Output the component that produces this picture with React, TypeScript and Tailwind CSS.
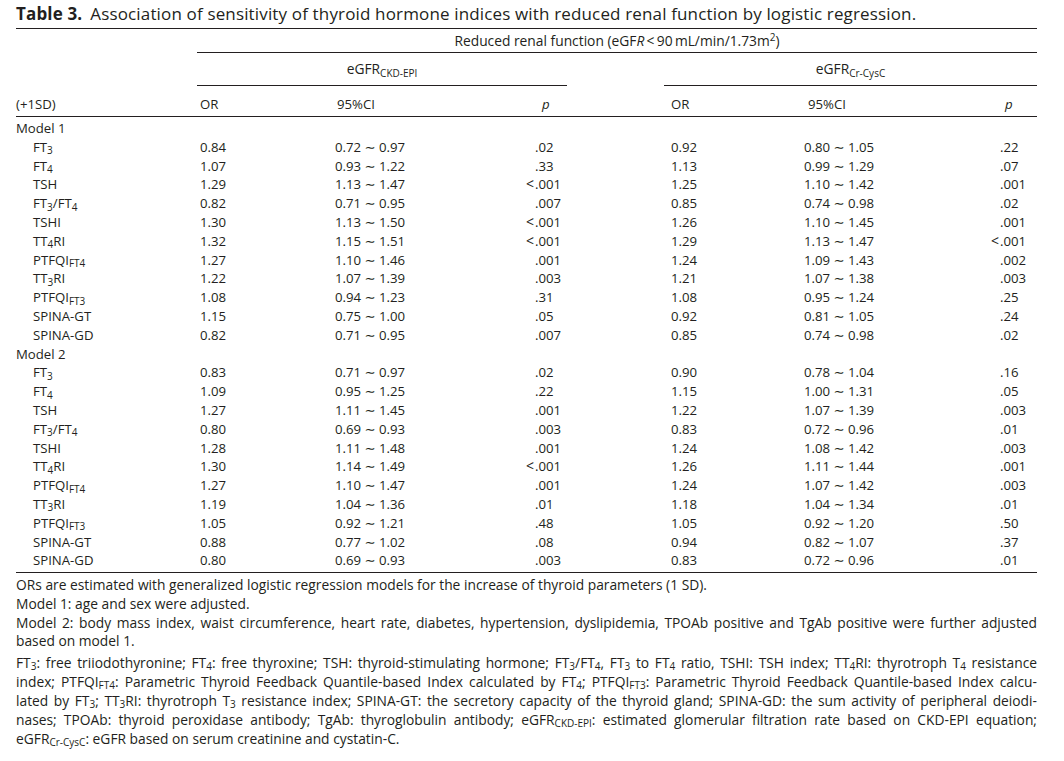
import type { ReactNode } from "react";

const Sub = ({ children }: { children: ReactNode }) => (
  <sub className="text-[10px]">{children}</sub>
);

const labels: Record<string, ReactNode> = {
  FT3: (
    <>
      FT<Sub>3</Sub>
    </>
  ),
  FT4: (
    <>
      FT<Sub>4</Sub>
    </>
  ),
  TSH: "TSH",
  RATIO: (
    <>
      FT<Sub>3</Sub>/FT<Sub>4</Sub>
    </>
  ),
  TSHI: "TSHI",
  TT4RI: (
    <>
      TT<Sub>4</Sub>RI
    </>
  ),
  PTFQI4: (
    <>
      PTFQI<Sub>FT4</Sub>
    </>
  ),
  TT3RI: (
    <>
      TT<Sub>3</Sub>RI
    </>
  ),
  PTFQI3: (
    <>
      PTFQI<Sub>FT3</Sub>
    </>
  ),
  GT: "SPINA-GT",
  GD: "SPINA-GD",
};

type Row = [string, string, string, string, string, string, string];

const model1: Row[] = [
  ["FT3", "0.84", "0.72 ∼ 0.97", ".02", "0.92", "0.80 ∼ 1.05", ".22"],
  ["FT4", "1.07", "0.93 ∼ 1.22", ".33", "1.13", "0.99 ∼ 1.29", ".07"],
  ["TSH", "1.29", "1.13 ∼ 1.47", "<.001", "1.25", "1.10 ∼ 1.42", ".001"],
  ["RATIO", "0.82", "0.71 ∼ 0.95", ".007", "0.85", "0.74 ∼ 0.98", ".02"],
  ["TSHI", "1.30", "1.13 ∼ 1.50", "<.001", "1.26", "1.10 ∼ 1.45", ".001"],
  ["TT4RI", "1.32", "1.15 ∼ 1.51", "<.001", "1.29", "1.13 ∼ 1.47", "<.001"],
  ["PTFQI4", "1.27", "1.10 ∼ 1.46", ".001", "1.24", "1.09 ∼ 1.43", ".002"],
  ["TT3RI", "1.22", "1.07 ∼ 1.39", ".003", "1.21", "1.07 ∼ 1.38", ".003"],
  ["PTFQI3", "1.08", "0.94 ∼ 1.23", ".31", "1.08", "0.95 ∼ 1.24", ".25"],
  ["GT", "1.15", "0.75 ∼ 1.00", ".05", "0.92", "0.81 ∼ 1.05", ".24"],
  ["GD", "0.82", "0.71 ∼ 0.95", ".007", "0.85", "0.74 ∼ 0.98", ".02"],
];

const model2: Row[] = [
  ["FT3", "0.83", "0.71 ∼ 0.97", ".02", "0.90", "0.78 ∼ 1.04", ".16"],
  ["FT4", "1.09", "0.95 ∼ 1.25", ".22", "1.15", "1.00 ∼ 1.31", ".05"],
  ["TSH", "1.27", "1.11 ∼ 1.45", ".001", "1.22", "1.07 ∼ 1.39", ".003"],
  ["RATIO", "0.80", "0.69 ∼ 0.93", ".003", "0.83", "0.72 ∼ 0.96", ".01"],
  ["TSHI", "1.28", "1.11 ∼ 1.48", ".001", "1.24", "1.08 ∼ 1.42", ".003"],
  ["TT4RI", "1.30", "1.14 ∼ 1.49", "<.001", "1.26", "1.11 ∼ 1.44", ".001"],
  ["PTFQI4", "1.27", "1.10 ∼ 1.47", ".001", "1.24", "1.07 ∼ 1.42", ".003"],
  ["TT3RI", "1.19", "1.04 ∼ 1.36", ".01", "1.18", "1.04 ∼ 1.34", ".01"],
  ["PTFQI3", "1.05", "0.92 ∼ 1.21", ".48", "1.05", "0.92 ∼ 1.20", ".50"],
  ["GT", "0.88", "0.77 ∼ 1.02", ".08", "0.94", "0.82 ∼ 1.07", ".37"],
  ["GD", "0.80", "0.69 ∼ 0.93", ".003", "0.83", "0.72 ∼ 0.96", ".01"],
];

const cols = "grid grid-cols-[184px_135px_185px_151px_133px_181px_52px]";

function PVal({ v }: { v: string }) {
  const lt = v.startsWith("<");
  return (
    <div className="flex items-center">
      <span className="w-[15px] text-right text-[14px] pr-[1px]">
        {lt ? "<" : ""}
      </span>
      <span>{lt ? v.slice(1) : v}</span>
    </div>
  );
}

function DataRow({ row }: { row: Row }) {
  const [key, or1, ci1, p1, or2, ci2, p2] = row;
  return (
    <div className={cols + " h-[18.8px] items-center"}>
      <div className="pl-[17px]">{labels[key]}</div>
      <div>{or1}</div>
      <div>{ci1}</div>
      <PVal v={p1} />
      <div>{or2}</div>
      <div>{ci2}</div>
      <PVal v={p2} />
    </div>
  );
}

function App() {
  return (
    <div
      className="w-[1064px] h-[761px] bg-white text-[#231f20] px-[16px] leading-[18.8px] text-[13.2px]"
      style={{ fontFamily: '"Open Sans", "DejaVu Sans", sans-serif' }}
    >
      <div className="w-[1021px]">
        <div className="h-[28px] flex items-center text-[17px] tracking-[0.15px]">
          <span className="font-bold">Table 3.</span>
          <span className="ml-[8px]">
            Association of sensitivity of thyroid hormone indices with reduced
            renal function by logistic regression.
          </span>
        </div>

        <div className="border-t-[1.5px] border-[#231f20]">
          <div className="pl-[181px] h-[24px]">
            <div className="h-full flex items-center justify-center border-b border-[#231f20] pt-[2px] text-[13.8px]">
              Reduced renal function (eGF<i>R</i>
              {"\u2009<\u2009"}90{"\u2009"}mL/min/1.73m
              <sup className="text-[10px]">2</sup>)
            </div>
          </div>
          <div className="grid grid-cols-[181px_370px_97px_373px] h-[33px]">
            <div />
            <div className="flex items-center justify-center border-b border-[#231f20] pt-[1px] text-[13.8px]">
              <span>
                eGFR<Sub>CKD-EPI</Sub>
              </span>
            </div>
            <div />
            <div className="flex items-center justify-center border-b border-[#231f20] pt-[1px] text-[13.8px]">
              <span>
                eGFR<Sub>Cr-CysC</Sub>
              </span>
            </div>
          </div>
          <div
            className={
              cols + " h-[31px] items-end pb-[2px] border-b-[1.5px] border-[#231f20]"
            }
          >
            <div>(+1SD)</div>
            <div>OR</div>
            <div className="pl-[2px]">95%CI</div>
            <div className="pl-[22px] italic">p</div>
            <div>OR</div>
            <div className="pl-[4px]">95%CI</div>
            <div className="pl-[20px] italic">p</div>
          </div>

          <div className="pt-[2px] pb-[2px] border-b-[1.5px] border-[#231f20]">
            <div className="h-[18.8px] flex items-center">Model 1</div>
            {model1.map((r, i) => (
              <DataRow key={"m1" + i} row={r} />
            ))}
            <div className="h-[18.8px] flex items-center">Model 2</div>
            {model2.map((r, i) => (
              <DataRow key={"m2" + i} row={r} />
            ))}
          </div>
        </div>

        <div className="mt-[3px] text-[13.8px] leading-[18.7px]">
          <p>
            ORs are estimated with generalized logistic regression models for
            the increase of thyroid parameters (1 SD).
          </p>
          <p>Model 1: age and sex were adjusted.</p>
          <p className="text-justify [text-align-last:justify]">
            Model 2: body mass index, waist circumference, heart rate, diabetes,
            hypertension, dyslipidemia, TPOAb positive and TgAb positive were
            further adjusted
          </p>
          <p>based on model 1.</p>
          <div className="mt-[2px] leading-[19px]">
            <p className="text-justify [text-align-last:justify]">
              FT<Sub>3</Sub>: free triiodothyronine; FT<Sub>4</Sub>: free
              thyroxine; TSH: thyroid-stimulating hormone; FT<Sub>3</Sub>/FT
              <Sub>4</Sub>, FT<Sub>3</Sub> to FT<Sub>4</Sub> ratio, TSHI: TSH
              index; TT<Sub>4</Sub>RI: thyrotroph T<Sub>4</Sub> resistance
            </p>
            <p className="text-justify [text-align-last:justify]">
              index; PTFQI<Sub>FT4</Sub>: Parametric Thyroid Feedback
              Quantile-based Index calculated by FT<Sub>4</Sub>; PTFQI
              <Sub>FT3</Sub>: Parametric Thyroid Feedback Quantile-based Index
              calcu-
            </p>
            <p className="text-justify [text-align-last:justify]">
              lated by FT<Sub>3</Sub>; TT<Sub>3</Sub>RI: thyrotroph T
              <Sub>3</Sub> resistance index; SPINA-GT: the secretory capacity of
              the thyroid gland; SPINA-GD: the sum activity of peripheral deiodi-
            </p>
            <p className="text-justify [text-align-last:justify]">
              nases; TPOAb: thyroid peroxidase antibody; TgAb: thyroglobulin
              antibody; eGFR<Sub>CKD-EPI</Sub>: estimated glomerular filtration
              rate based on CKD-EPI equation;
            </p>
            <p>
              eGFR<Sub>Cr-CysC</Sub>: eGFR based on serum creatinine and
              cystatin-C.
            </p>
          </div>
        </div>
      </div>
    </div>
  );
}

export default App;
